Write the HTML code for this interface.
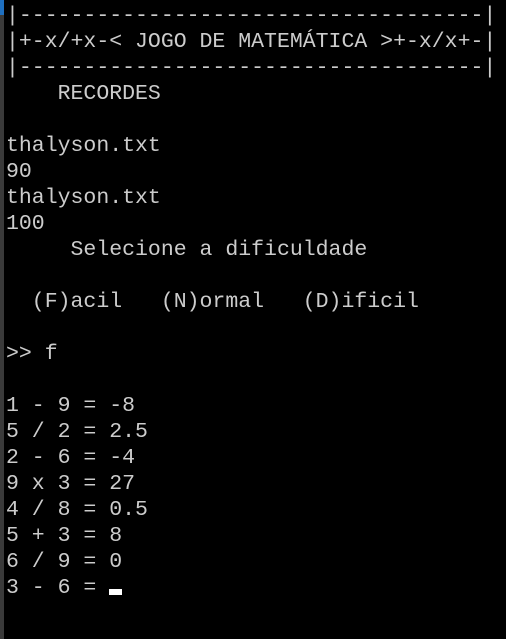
<!DOCTYPE html>
<html><head><meta charset="utf-8"><style>
html,body{margin:0;padding:0;background:#000;width:506px;height:639px;overflow:hidden}
.edge{position:absolute;left:0;top:0;width:4px;height:639px;background:#3a3a3a}
.edge::before{content:"";position:absolute;left:0;top:0;width:4px;height:15px;background:#1e6fc0}
pre{position:absolute;left:6px;top:3px;margin:0;font-family:"Liberation Mono",monospace;font-size:21.5px;line-height:26px;color:#cccccc;white-space:pre}
.cur{display:inline-block;width:13px;height:6px;background:#fff;vertical-align:-2px}
</style></head><body><div class="edge"></div><pre>|------------------------------------|
|+-x/+x-&lt; JOGO DE MATEMÁTICA &gt;+-x/x+-|
|------------------------------------|
    RECORDES

thalyson.txt
90
thalyson.txt
100
     Selecione a dificuldade

  (F)acil   (N)ormal   (D)ificil

&gt;&gt; f

1 - 9 = -8
5 / 2 = 2.5
2 - 6 = -4
9 x 3 = 27
4 / 8 = 0.5
5 + 3 = 8
6 / 9 = 0
3 - 6 = <span class="cur"></span></pre></body></html>
